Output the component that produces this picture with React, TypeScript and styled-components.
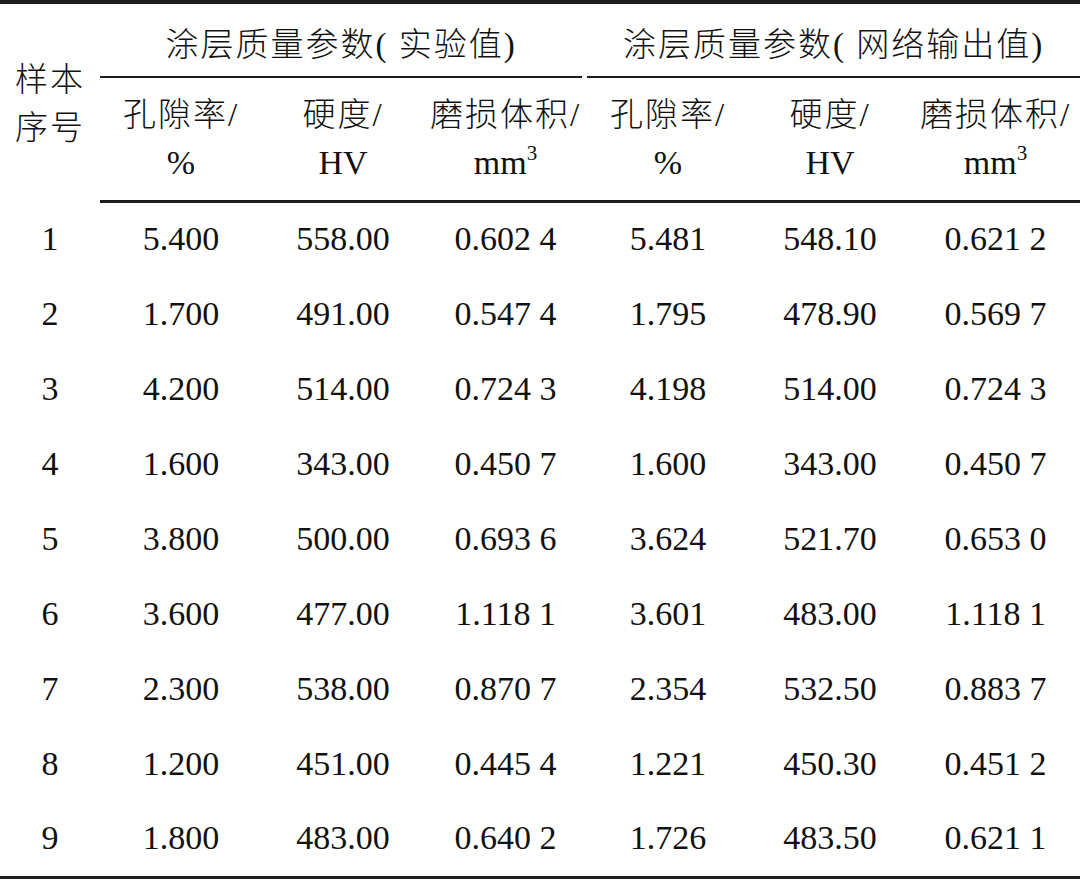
import React from 'react';
import styled, {createGlobalStyle} from "styled-components";

const GlobalStyle = createGlobalStyle`
  html, body {
    margin: 0;
    padding: 0;
    background: #ffffff;
  }
  body {
    width: 1080px;
    height: 879px;
    overflow: hidden;
  }
`

const INK = '#1e1c1c'
const HEAD_FONT = `"Liberation Serif", "Noto Sans CJK SC", serif`

const Table = styled.table`
  width: 1080px;
  table-layout: fixed;
  border-collapse: separate;
  border-spacing: 0;
  border-top: 4px solid ${INK};
  border-bottom: 5px solid ${INK};
  color: #111;
  font-family: "Liberation Serif", "Times New Roman", serif;
`

const HeadCell = styled.th`
  padding: 0;
  font-family: ${HEAD_FONT};
  font-weight: 300;
  font-size: 33px;
  letter-spacing: 2px;
  text-align: center;
  vertical-align: middle;
`

const SideHead = styled(HeadCell)`
  line-height: 48px;
  padding-top: 0;
`

const GroupLabel = styled.div<{ $gap: number }>`
  display: flex;
  align-items: center;
  justify-content: center;
  height: 69px;
  padding-top: 3px;
  margin-right: ${props => props.$gap}px;
  border-bottom: 2px solid ${INK};
  white-space: nowrap;
`

const UnitCell = styled(HeadCell)`
  height: 122px;
  line-height: 47px;
  border-bottom: 3px solid ${INK};
  white-space: nowrap;
`

const Unit = styled.span`
  font-family: "Liberation Serif", "Times New Roman", serif;
  letter-spacing: 0;
  font-size: 34px;

  sup {
    font-size: 21px;
    vertical-align: 14px;
    line-height: 0;
  }
`

const Row = styled.tr<{ $last?: boolean }>`
  height: ${props => (props.$last ? 73 : 75)}px;
`

const Cell = styled.td`
  padding: 0 0 3px;
  font-size: 34px;
  text-align: center;
  vertical-align: middle;
  white-space: nowrap;
`

type Sample = [string, string, string, string, string, string]

const rows: Sample[] = [
    ['5.400', '558.00', '0.602 4', '5.481', '548.10', '0.621 2'],
    ['1.700', '491.00', '0.547 4', '1.795', '478.90', '0.569 7'],
    ['4.200', '514.00', '0.724 3', '4.198', '514.00', '0.724 3'],
    ['1.600', '343.00', '0.450 7', '1.600', '343.00', '0.450 7'],
    ['3.800', '500.00', '0.693 6', '3.624', '521.70', '0.653 0'],
    ['3.600', '477.00', '1.118 1', '3.601', '483.00', '1.118 1'],
    ['2.300', '538.00', '0.870 7', '2.354', '532.50', '0.883 7'],
    ['1.200', '451.00', '0.445 4', '1.221', '450.30', '0.451 2'],
    ['1.800', '483.00', '0.640 2', '1.726', '483.50', '0.621 1'],
]

const widths = [100, 162, 162, 163, 162, 162, 169]

const UnitHeads = () => (
    <>
        <UnitCell>孔隙率/<br/><Unit>%</Unit></UnitCell>
        <UnitCell>硬度/<br/><Unit>HV</Unit></UnitCell>
        <UnitCell>磨损体积/<br/><Unit>mm<sup>3</sup></Unit></UnitCell>
    </>
)

const App = () => {
    return (
        <>
            <GlobalStyle/>
            <Table>
                <colgroup>
                    {widths.map((w, i) => <col key={i} style={{width: w}}/>)}
                </colgroup>
                <thead>
                <tr>
                    <SideHead rowSpan={2}>样本<br/>序号</SideHead>
                    <HeadCell colSpan={3}>
                        <GroupLabel $gap={5}>涂层质量参数(&nbsp;实验值)</GroupLabel>
                    </HeadCell>
                    <HeadCell colSpan={3}>
                        <GroupLabel $gap={0}>涂层质量参数(&nbsp;网络输出值)</GroupLabel>
                    </HeadCell>
                </tr>
                <tr>
                    <UnitHeads/>
                    <UnitHeads/>
                </tr>
                </thead>
                <tbody>
                {rows.map((r, i) => (
                    <Row key={i} $last={i === rows.length - 1}>
                        <Cell>{i + 1}</Cell>
                        {r.map((v, j) => <Cell key={j}>{v}</Cell>)}
                    </Row>
                ))}
                </tbody>
            </Table>
        </>
    )
}

export default App
